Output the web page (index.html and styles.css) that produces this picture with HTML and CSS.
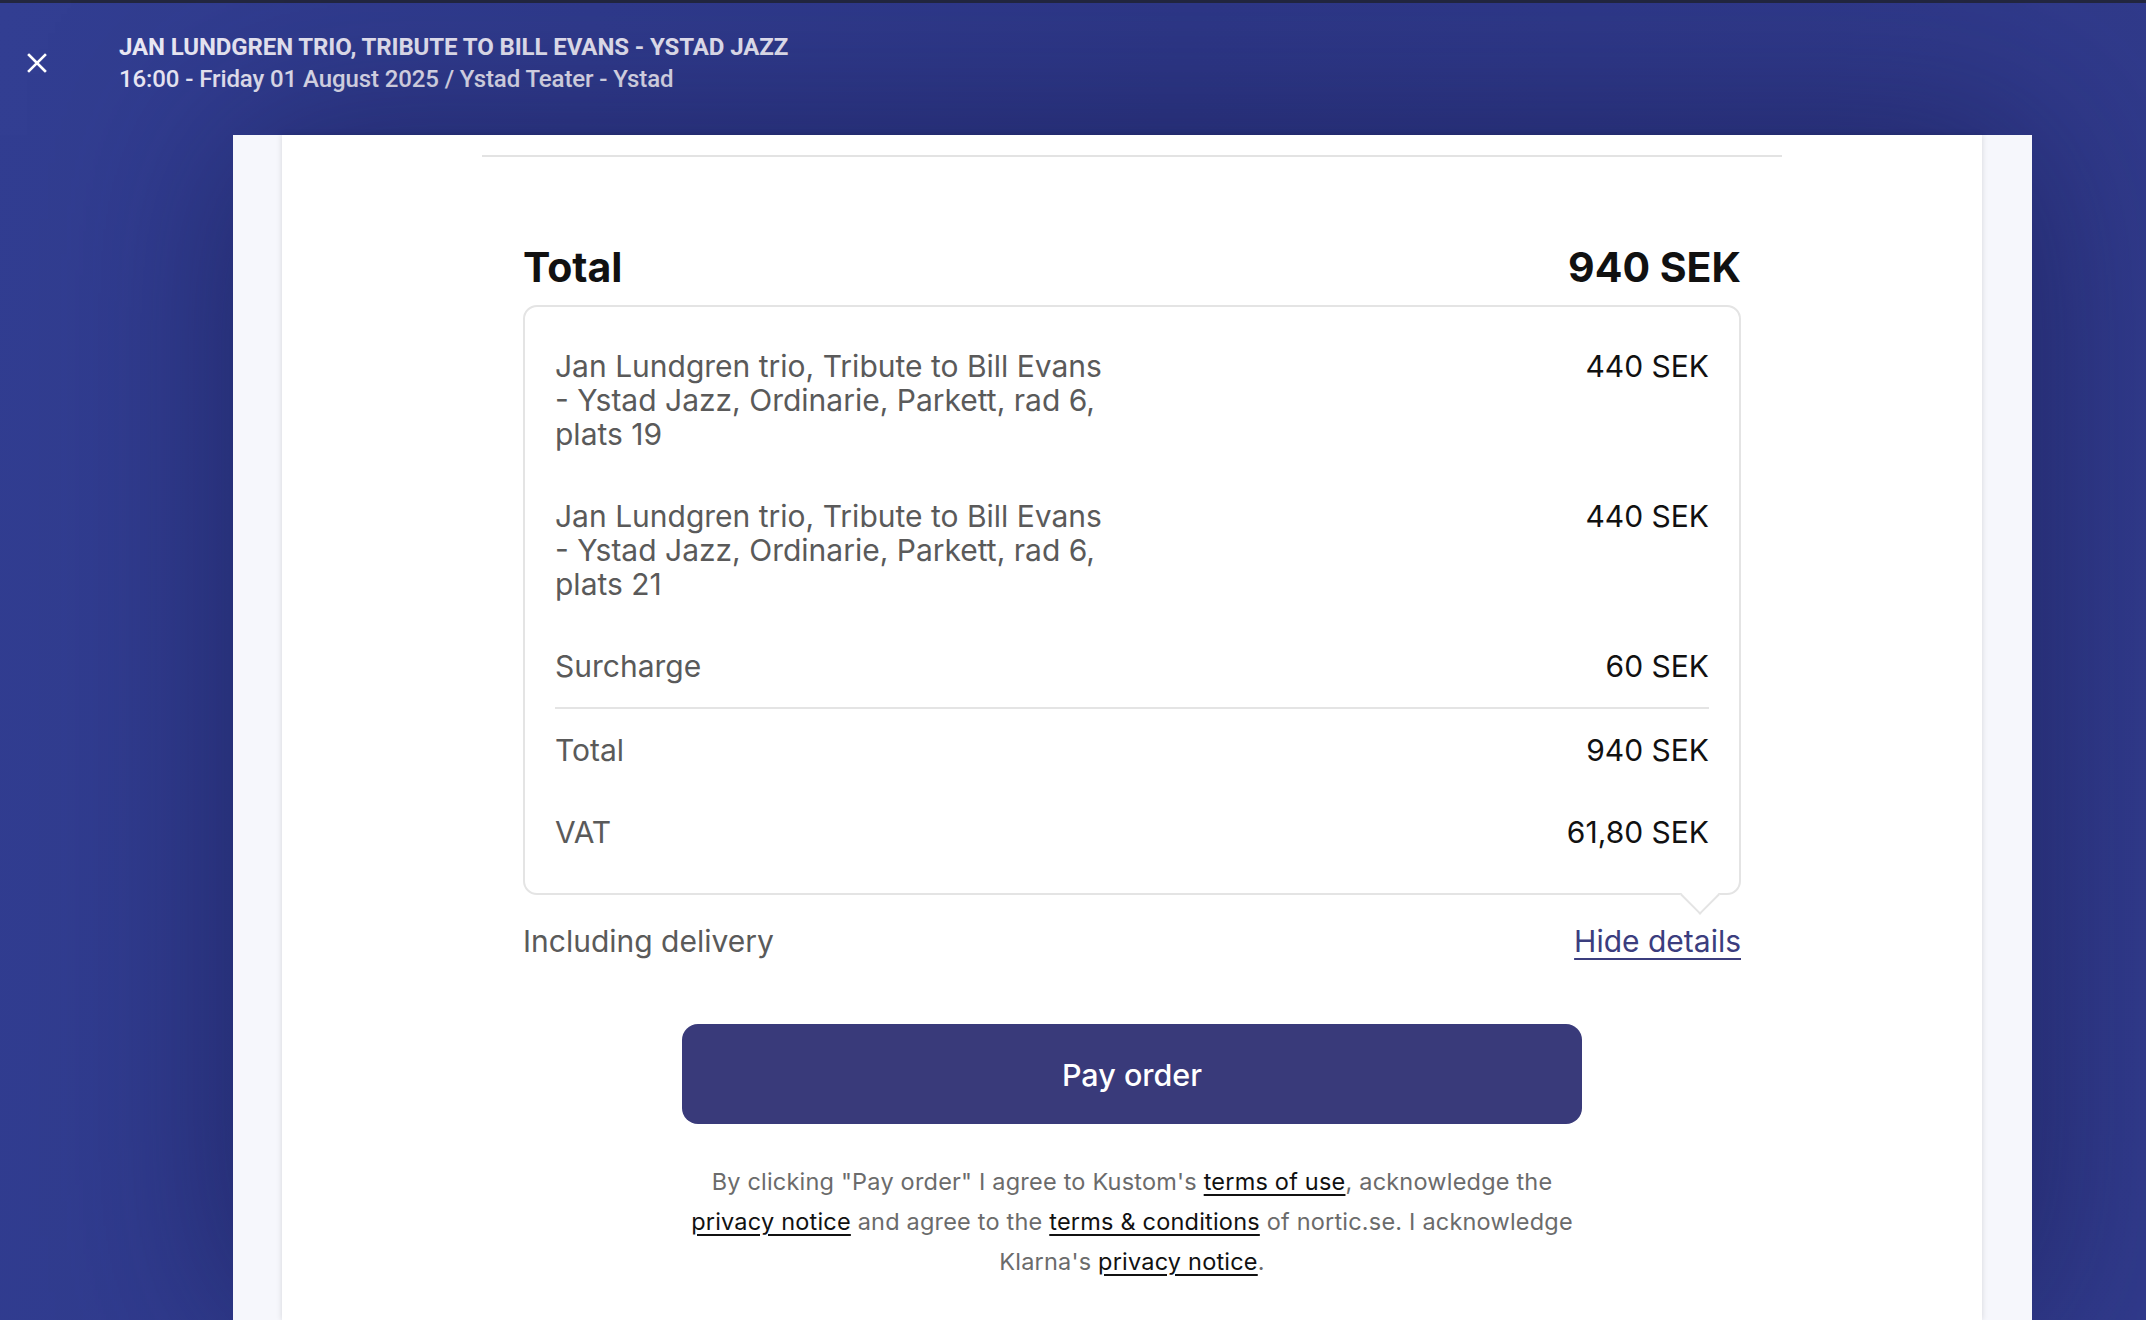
FILE: index.html
```html
<!DOCTYPE html>
<html lang="en">
<head>
<meta charset="utf-8">
<title>Pay order</title>
<link rel="stylesheet" href="styles.css">
</head>
<body>
<div class="topline"></div>
<header class="header">
  <button class="close" aria-label="Close">
    <svg width="20" height="20" viewBox="0 0 20 20"><path d="M2 2L18 18M18 2L2 18" stroke="#ffffff" stroke-width="2.6" stroke-linecap="square" fill="none"/></svg>
  </button>
  <div class="event">
    <div class="event-title">JAN LUNDGREN TRIO, TRIBUTE TO BILL EVANS - YSTAD JAZZ</div>
    <div class="event-meta">16:00 - Friday 01 August 2025 / Ystad Teater - Ystad</div>
  </div>
</header>
<main class="stage">
  <div class="sheet">
    <div class="panel">
      <div class="rule"></div>
      <section class="summary">
        <div class="summary-head">
          <h2>Total</h2>
          <span>940 SEK</span>
        </div>
        <div class="details">
          <div class="row">
            <span class="label item">Jan Lundgren trio, Tribute to Bill Evans - Ystad Jazz, Ordinarie, Parkett, rad 6, plats 19</span>
            <span class="value">440 SEK</span>
          </div>
          <div class="row">
            <span class="label item">Jan Lundgren trio, Tribute to Bill Evans - Ystad Jazz, Ordinarie, Parkett, rad 6, plats 21</span>
            <span class="value">440 SEK</span>
          </div>
          <div class="row">
            <span class="label">Surcharge</span>
            <span class="value">60 SEK</span>
          </div>
          <div class="divider"></div>
          <div class="row">
            <span class="label">Total</span>
            <span class="value">940 SEK</span>
          </div>
          <div class="row">
            <span class="label">VAT</span>
            <span class="value">61,80 SEK</span>
          </div>
          <div class="pointer"></div>
        </div>
        <div class="delivery-row">
          <span class="delivery">Including delivery</span>
          <a class="hide" href="#">Hide details</a>
        </div>
        <button class="pay">Pay order</button>
        <p class="legal">By clicking "Pay order" I agree to Kustom's <a href="#">terms of use</a>, acknowledge the <a href="#">privacy notice</a> and agree to the <a href="#">terms &amp; conditions</a> of nortic.se. I acknowledge Klarna's <a href="#">privacy notice</a>.</p>
      </section>
    </div>
  </div>
</main>
</body>
</html>
```

FILE: styles.css
```css
* {
  box-sizing: border-box;
}

html, body {
  margin: 0;
  padding: 0;
}

body {
  width: 2146px;
  height: 1320px;
  overflow: hidden;
  background: linear-gradient(100deg, #323e92 0%, #2e3888 50%, #313b8c 100%);
  font-family: Inter, "Liberation Sans", sans-serif;
}

.topline {
  height: 3px;
  background: #23273f;
}

.header {
  height: 132px;
  display: flex;
  align-items: flex-start;
  padding: 28px 0 0 27px;
  color: #eceaf6;
  font-family: Roboto, "Liberation Sans", sans-serif;
}

.close {
  width: 20px;
  height: 20px;
  margin-top: 22px;
  padding: 0;
  border: 0;
  background: none;
  display: flex;
}

.event {
  margin-left: 72px;
  font-size: 24px;
  line-height: 32px;
}

.event-title {
  font-weight: 700;
  letter-spacing: -0.1px;
}

.event-meta {
  font-weight: 500;
  letter-spacing: -0.1px;
}

.stage {
  display: flex;
  padding-left: 233px;
}

.sheet {
  width: 1799px;
  height: 1185px;
  padding: 0 50px 0 49px;
  background: #f6f7fc;
  box-shadow: 0 0 170px rgba(18, 20, 70, 0.55);
}

.panel {
  height: 100%;
  background: #ffffff;
  box-shadow: 0 0 6px rgba(0, 0, 0, 0.14);
  padding-top: 20px;
}

.rule {
  height: 2px;
  margin: 0 200px;
  background: #e3e3e3;
}

.summary {
  margin: 86px 241px 0;
}

.summary-head {
  display: flex;
  justify-content: space-between;
  align-items: baseline;
  font-size: 41px;
  line-height: 48px;
  font-weight: 700;
  color: #111111;
  margin-bottom: 14px;
}

.summary-head h2 {
  margin: 0;
  font-size: inherit;
  font-weight: inherit;
}

.details {
  position: relative;
  border: 2px solid #e4e4e4;
  border-radius: 14px;
  padding: 18px 30px 20px;
  font-size: 30px;
  line-height: 34px;
}

.row {
  display: flex;
  justify-content: space-between;
  align-items: flex-start;
  padding: 24px 0;
}

.label {
  color: #5a5a5a;
}

.label.item {
  max-width: 558px;
}

.value {
  color: #111111;
  white-space: nowrap;
}

.divider {
  height: 2px;
  background: #e4e4e4;
}

.pointer {
  position: absolute;
  right: 25px;
  bottom: -16px;
  width: 28px;
  height: 28px;
  background: #ffffff;
  border-right: 2px solid #e4e4e4;
  border-bottom: 2px solid #e4e4e4;
  transform: rotate(45deg);
}

.delivery-row {
  display: flex;
  justify-content: space-between;
  align-items: baseline;
  margin-top: 28px;
  font-size: 30px;
  line-height: 36px;
}

.delivery {
  color: #5a5a5a;
}

.hide {
  color: #3b3d7e;
  font-size: 30px;
  text-decoration: underline;
  text-decoration-thickness: 2px;
  text-underline-offset: 6px;
}

.pay {
  display: block;
  width: 900px;
  height: 100px;
  margin: 65px auto 0;
  border: 0;
  border-radius: 16px;
  background: #393a7a;
  color: #ffffff;
  font-family: Inter, "Liberation Sans", sans-serif;
  font-size: 30.5px;
  font-weight: 500;
}

.legal {
  width: 900px;
  margin: 38px auto 0;
  text-align: center;
  font-size: 23.5px;
  line-height: 40px;
  color: #6b6b6b;
  letter-spacing: 0.2px;
}

.legal a {
  color: #111111;
  text-decoration: underline;
  text-underline-offset: 4px;
}
```
